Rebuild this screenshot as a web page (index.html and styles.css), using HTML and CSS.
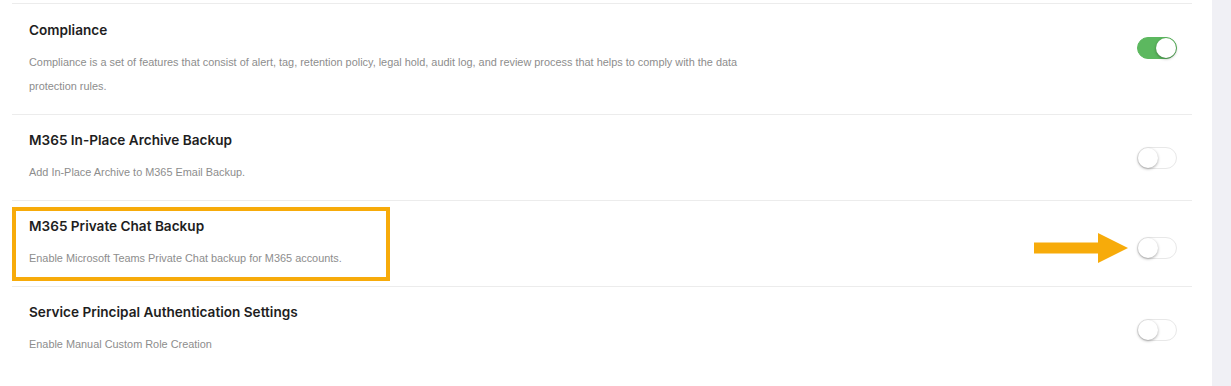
FILE: index.html
```html
<!DOCTYPE html>
<html>
    <head>
        <link rel="stylesheet" href="styles.css">
    </head>
    <body>
        <div class="page">
            <div class="panel">
                <div class="setting">
                    <div class="info">
                        <p class="title">Compliance</p>
                        <p class="desc">Compliance is a set of features that consist of alert, tag, retention policy, legal hold, audit log, and review process that helps to comply with the data protection rules.</p>
                    </div>
                    <div class="control">
                        <span class="toggle on"></span>
                    </div>
                </div>
                <div class="setting">
                    <div class="info">
                        <p class="title">M365 In-Place Archive Backup</p>
                        <p class="desc">Add In-Place Archive to M365 Email Backup.</p>
                    </div>
                    <div class="control">
                        <span class="toggle"></span>
                    </div>
                </div>
                <div class="setting marked">
                    <div class="mark"></div>
                    <div class="info">
                        <p class="title">M365 Private Chat Backup</p>
                        <p class="desc">Enable Microsoft Teams Private Chat backup for M365 accounts.</p>
                    </div>
                    <div class="control">
                        <svg class="arrow" width="94" height="30" viewBox="0 0 94 30">
                            <polygon points="0,9.5 64,9.5 64,0 94,15 64,30 64,20.5 0,20.5" fill="#f7ab0a"/>
                        </svg>
                        <span class="toggle"></span>
                    </div>
                </div>
                <div class="setting">
                    <div class="info">
                        <p class="title">Service Principal Authentication Settings</p>
                        <p class="desc">Enable Manual Custom Role Creation</p>
                    </div>
                    <div class="control">
                        <span class="toggle"></span>
                    </div>
                </div>
            </div>
            <div class="side"></div>
        </div>
    </body>
</html>
```

FILE: styles.css
```css
body{
    margin: 0;
    background-color: #ffffff;
    font-family: 'Liberation Sans', Arial, sans-serif;
}
p{
    margin: 0;
}
.page{
    display: flex;
    height: 386px;
}
.panel{
    width: 1180px;
    padding: 3px 0 0 12px;
}
.side{
    margin-left: auto;
    width: 19px;
    background-color: #f0f0f5;
}
.setting{
    display: flex;
    justify-content: space-between;
    align-items: flex-start;
    border-top: 1px solid #ececec;
    padding: 15px 15px 16px 17px;
    position: relative;
}
.setting:first-child{
    padding-top: 16px;
}
.title{
    font-family: 'Inter', 'Noto Sans', sans-serif;
    font-weight: 600;
    font-size: 13.6px;
    line-height: 20px;
    color: #1e1e1e;
}
.desc{
    margin-top: 10px;
    max-width: 725px;
    font-size: 10.9px;
    line-height: 24px;
    color: #8d8d8d;
}
.control{
    display: flex;
    align-items: center;
    gap: 9px;
    margin-top: 17px;
}
.arrow{
    display: block;
}
.toggle{
    display: block;
    width: 40px;
    height: 22px;
    border-radius: 11px;
    background-color: #ffffff;
    border: 1px solid #e8e8e8;
    box-sizing: border-box;
    position: relative;
}
.toggle::after{
    content: '';
    position: absolute;
    top: 0;
    left: 0;
    width: 20px;
    height: 20px;
    border-radius: 50%;
    background-color: #ffffff;
    box-shadow: 0 1px 3px rgba(0,0,0,0.35);
}
.toggle.on{
    background-color: #5cb85f;
    border-color: #5cb85f;
}
.toggle.on::after{
    left: auto;
    right: 0;
}
.mark{
    position: absolute;
    left: 0;
    top: 6px;
    width: 378px;
    height: 74px;
    border: 4px solid #f7ab0a;
    box-sizing: border-box;
}
```
